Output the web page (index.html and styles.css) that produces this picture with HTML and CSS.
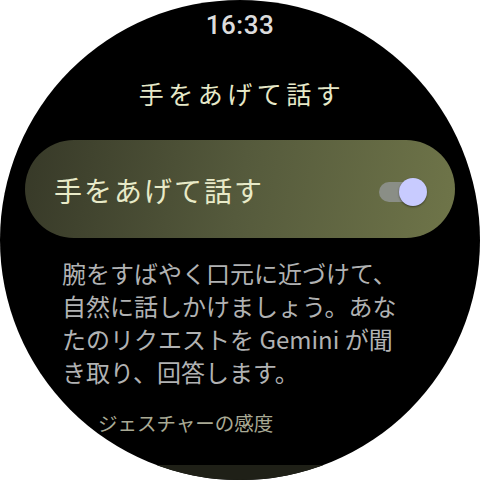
FILE: index.html
```html
<!DOCTYPE html>
<html lang="ja">
<head>
<meta charset="utf-8">
<link rel="stylesheet" href="styles.css">
</head>
<body>
<div class="watch">
  <div class="time">16:33</div>
  <div class="title">手をあげて話す</div>
  <div class="card">
    <div class="card-label">手をあげて話す</div>
    <div class="toggle"><div class="track"></div><div class="knob"></div></div>
  </div>
  <p class="desc">腕をすばやく口元に近づけて、<br>自然に話しかけましょう。あな<br>たのリクエストを Gemini が聞<br>き取り、回答します。</p>
  <div class="section">ジェスチャーの感度</div>
  <div class="next-card"></div>
</div>
</body>
</html>
```
FILE: styles.css
```css
html, body {
  margin: 0;
  padding: 0;
  background: #ffffff;
}
.watch {
  width: 480px;
  height: 480px;
  border-radius: 50%;
  background: #000;
  overflow: hidden;
  display: flex;
  flex-direction: column;
  align-items: center;
  font-family: "Noto Sans CJK JP", "Noto Sans", sans-serif;
}
.watch > * {
  flex-shrink: 0;
}
.time {
  margin-top: 10px;
  font-family: Roboto, "Noto Sans", sans-serif;
  font-weight: 500;
  font-size: 26px;
  line-height: 30px;
  color: #dcdcdc;
  letter-spacing: 0.5px;
}
.title {
  margin-top: 37px;
  font-size: 25px;
  line-height: 32px;
  letter-spacing: 4.5px;
  color: #e6e8c8;
  padding-left: 4px;
}
.card {
  margin-top: 31px;
  width: 430px;
  height: 98px;
  border-radius: 49px;
  background: linear-gradient(100deg, #373928 0%, #555a3c 50%, #6f7549 100%);
  display: flex;
  align-items: center;
  justify-content: space-between;
  box-sizing: border-box;
  padding: 0 28px 0 29px;
}
.card-label {
  font-size: 28px;
  line-height: 36px;
  letter-spacing: 2px;
  color: #e8eac8;
  margin-top: 2px;
}
.toggle {
  position: relative;
  width: 48px;
  height: 28px;
  margin-top: 6px;
}
.track {
  position: absolute;
  left: 0;
  top: 4px;
  width: 44px;
  height: 20px;
  border-radius: 10px;
  background: #8a8e86;
}
.knob {
  position: absolute;
  right: 0;
  top: 0;
  width: 28px;
  height: 28px;
  border-radius: 50%;
  background: #c8cbff;
  box-shadow: 0 1px 2px rgba(0,0,0,0.45);
}
.desc {
  align-self: flex-start;
  margin: 18px 0 0 62px;
  font-size: 24px;
  line-height: 33px;
  color: #b1b2b3;
  white-space: nowrap;
}
.section {
  align-self: flex-start;
  margin: 22px 0 0 98px;
  font-size: 19.5px;
  line-height: 26px;
  color: #a9aa95;
}
.next-card {
  margin-top: 29px;
  width: 430px;
  height: 98px;
  border-radius: 49px;
  background: #1f2017;
}
```
